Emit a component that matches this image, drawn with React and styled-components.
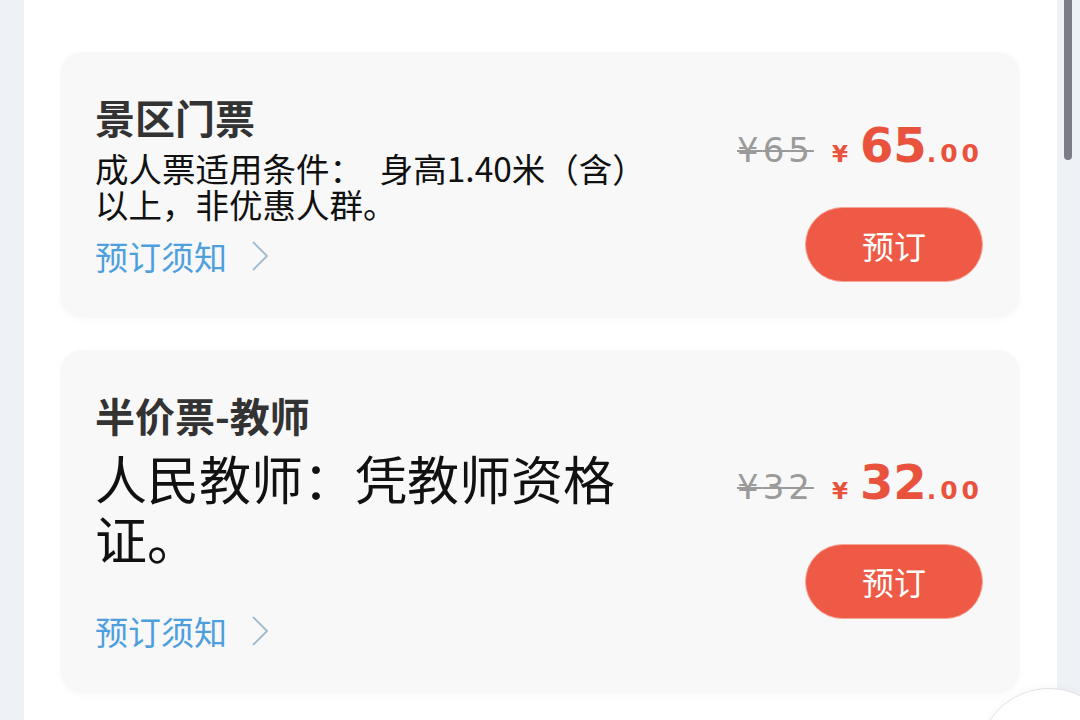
import React from "react";
import styled, { createGlobalStyle } from "styled-components";

const GlobalStyle = createGlobalStyle`
  html, body {
    margin: 0;
    padding: 0;
    height: 720px;
    overflow: hidden;
    background: #eef1f6;
    font-family: "Noto Sans CJK SC", "Noto Sans", sans-serif;
  }
  #root {
    height: 720px;
  }
`;

const Page = styled.div`
  display: flex;
  flex-direction: row;
  height: 720px;
  position: relative;
  overflow: hidden;
`;

const SideGutter = styled.div`
  width: 24px;
  flex-shrink: 0;
  background: #eef1f6;
`;

const ScrollTrack = styled.div`
  width: 23px;
  flex-shrink: 0;
  background: #eef1f6;
  display: flex;
  flex-direction: column;
`;

const ScrollThumb = styled.div`
  width: 8px;
  height: 160px;
  margin-left: 7px;
  border-radius: 0 0 4px 4px;
  background: #7c7c84;
`;

const Panel = styled.div`
  flex: 1;
  background: #ffffff;
  padding: 52px 37px 0 36px;
  display: flex;
  flex-direction: column;
  gap: 32px;
`;

const Card = styled.div`
  display: grid;
  grid-template-columns: 1fr auto;
  padding: 42px 37px 42px 35px;
  border-radius: 22px;
  background: #f8f8f9;
  box-shadow: 0 2px 10px rgba(0, 0, 0, 0.025);
`;

const Info = styled.div`
  display: flex;
  flex-direction: column;
`;

const Title = styled.div`
  font-size: 40px;
  line-height: 46px;
  font-weight: 700;
  color: #333333;
`;

const Desc = styled.div`
  max-width: 560px;
  margin-top: ${(p) => p.top}px;
  margin-bottom: ${(p) => p.bottom}px;
  font-size: ${(p) => p.size}px;
  line-height: ${(p) => p.lh}px;
  color: #111111;
`;

const Notice = styled.a`
  display: flex;
  align-items: center;
  gap: 24px;
  font-size: 33px;
  line-height: 40px;
  color: #4d9fdd;
  cursor: pointer;
`;

/* price + button column, centred a little below the card's middle */
const Side = styled.div`
  display: flex;
  flex-direction: column;
  align-items: flex-end;
  align-self: center;
  margin-top: 17px;
  margin-bottom: -17px;
  gap: 30px;
`;

const PriceRow = styled.div`
  display: flex;
  align-items: baseline;
  line-height: 46px;
  font-family: "DejaVu Sans", "Noto Sans", sans-serif;
`;

const OldPrice = styled.span`
  font-size: 34px;
  letter-spacing: 4px;
  color: #9a9a9a;
  text-decoration: line-through;
  text-decoration-thickness: 2px;
  margin-right: 18px;
`;

const Yen = styled.span`
  font-size: 23px;
  font-weight: 700;
  color: #e9533e;
  margin-right: 12px;
`;

const Amount = styled.span`
  font-size: 48px;
  font-weight: 700;
  color: #e9533e;
`;

const Cents = styled.span`
  font-size: 25px;
  font-weight: 700;
  color: #e9533e;
  letter-spacing: 4px;
`;

const BookButton = styled.button`
  width: 178px;
  height: 75px;
  border-radius: 38px;
  border: 1px solid #f6a898;
  background: #ee5a45;
  color: #ffffff;
  font-family: "Noto Sans CJK SC", sans-serif;
  font-size: 32px;
  cursor: pointer;
`;

const FloatButton = styled.div`
  position: absolute;
  right: -40px;
  bottom: -110px;
  width: 140px;
  height: 140px;
  border-radius: 50%;
  background: #ffffff;
  border: 1px solid #e3e3e6;
  box-shadow: 0 0 10px rgba(0, 0, 0, 0.04);
`;

const Chevron = () => (
  <svg width="18" height="32" viewBox="0 0 18 32" fill="none">
    <path d="M2 2 L16 16 L2 30" stroke="#9fb9cc" strokeWidth="1.8" strokeLinejoin="round" />
  </svg>
);

const tickets = [
  {
    title: "景区门票",
    lines: "成人票适用条件：　身高1.40米（含）以上，非优惠人群。",
    size: 33.5,
    lh: 36,
    top: 10,
    bottom: 14,
    old: "65",
    price: "65",
  },
  {
    title: "半价票-教师",
    lines: "人民教师：凭教师资格证。",
    size: 52,
    lh: 60,
    top: 10,
    bottom: 43,
    old: "32",
    price: "32",
  },
];

function TicketCard({ t }) {
  return (
    <Card>
      <Info>
        <Title>{t.title}</Title>
        <Desc size={t.size} lh={t.lh} top={t.top} bottom={t.bottom}>
          {t.lines}
        </Desc>
        <Notice>
          预订须知
          <Chevron />
        </Notice>
      </Info>
      <Side>
        <PriceRow>
          <OldPrice>¥{t.old}</OldPrice>
          <Yen>¥</Yen>
          <Amount>{t.price}</Amount>
          <Cents>.00</Cents>
        </PriceRow>
        <BookButton>预订</BookButton>
      </Side>
    </Card>
  );
}

export default function App() {
  return (
    <>
      <GlobalStyle />
      <Page>
        <SideGutter />
        <Panel>
          {tickets.map((t) => (
            <TicketCard key={t.title} t={t} />
          ))}
        </Panel>
        <ScrollTrack>
          <ScrollThumb />
        </ScrollTrack>
        <FloatButton />
      </Page>
    </>
  );
}
